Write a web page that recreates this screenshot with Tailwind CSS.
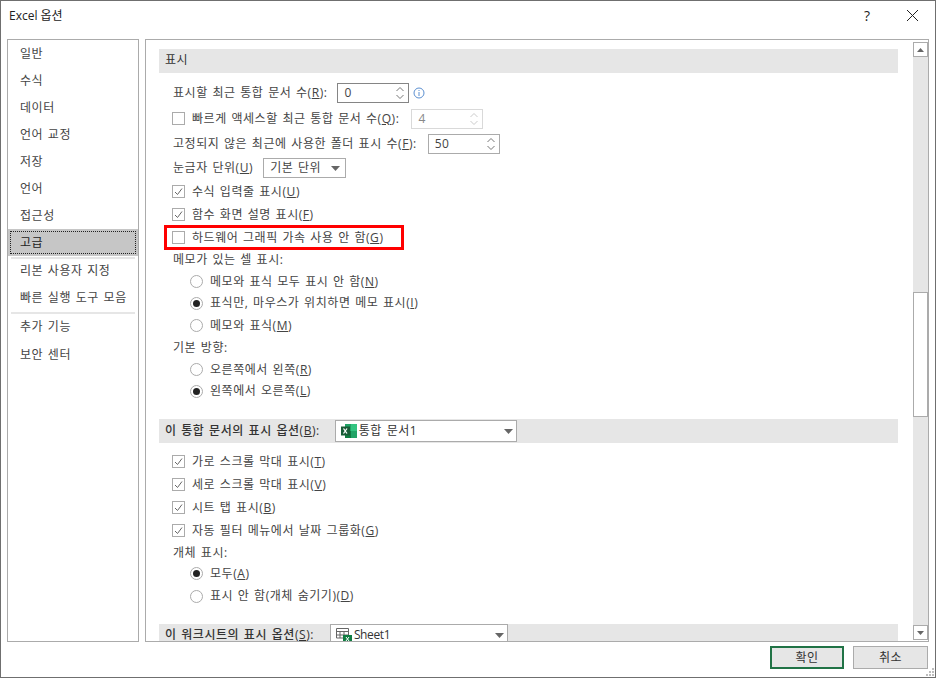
<!DOCTYPE html>
<html lang="ko"><head><meta charset="utf-8"><script src="https://cdn.jsdelivr.net/npm/@tailwindcss/browser@4"></script></head>
<body class="bg-white">
<div class="w-[936px] h-[678px] bg-white border border-[#6f6f6f] flex flex-col overflow-hidden text-[#444] text-[12px] tracking-[0.55px] [word-spacing:1px] font-['Open_Sans','Noto_Sans_CJK_KR',sans-serif] relative">
  <div class="h-[38px] shrink-0 flex items-center pl-[8px] text-[#222] tracking-normal [word-spacing:0px]">
    <span class="flex-1 text-[12px] pb-[8px]">Excel 옵션</span>
    <span class="w-[14px] text-center text-[14px] mr-[33px] pb-[9px]">?</span>
    <svg class="w-[11px] h-[11px] mr-[17px] mb-[10px]" viewBox="0 0 11 11"><path d="M0 0L11 11M11 0L0 11" stroke="#222" stroke-width="1" fill="none"/></svg>
  </div>
  <div class="flex h-[603px] shrink-0 pl-[6px] gap-[6px]">
    <div class="w-[132px] border border-[#ababab] flex flex-col text-[#444]">
      <div class="h-[27px] shrink-0 flex items-center pl-[12px]">일반</div>
      <div class="h-[27px] shrink-0 flex items-center pl-[12px]">수식</div>
      <div class="h-[27px] shrink-0 flex items-center pl-[12px]">데이터</div>
      <div class="h-[27px] shrink-0 flex items-center pl-[12px]">언어 교정</div>
      <div class="h-[27px] shrink-0 flex items-center pl-[12px]">저장</div>
      <div class="h-[27px] shrink-0 flex items-center pl-[12px]">언어</div>
      <div class="h-[27px] shrink-0 flex items-center pl-[12px]">접근성</div>
      <div class="h-[27px] shrink-0 bg-[#c6c6c6] p-[2px]"><div class="h-full flex items-center pl-[9px] text-[#222] border border-dotted border-[#222]">고급</div></div>
      <div class="h-[2px] shrink-0 bg-[#e6e6e6] mx-[3px] mt-[1px]"></div>
      <div class="h-[25px] shrink-0 pb-[1px] flex items-center pl-[12px]">리본 사용자 지정</div>
      <div class="h-[27px] shrink-0 flex items-center pl-[12px]">빠른 실행 도구 모음</div>
      <div class="h-[2px] shrink-0 bg-[#e6e6e6] mx-[3px] mt-[1px]"></div>
      <div class="h-[25px] shrink-0 pt-[1px] flex items-center pl-[12px]">추가 기능</div>
      <div class="h-[27px] shrink-0 mt-[2px] flex items-center pl-[12px]">보안 센터</div>
    </div>
    <div class="w-[784px] border border-[#ababab] flex overflow-hidden">
      <div class="w-[766px] pl-[13px] pt-[9px] overflow-hidden">
        <div class="w-[739px] h-[24px] bg-[#e6e6e6] flex items-center pl-[6px] pb-[2px] text-[#333]">표시</div>
        <div class="h-[7px]"></div>
        <div class="h-[26px] flex items-center pl-[14px]">표시할 최근 통합 문서 수(<u>R</u>):
          <div class="ml-[10px] w-[72px] h-[20px] border border-[#858585] flex items-center pl-[6px] justify-between">0
            <svg class="w-[10px] h-[14px] mr-[3px]" viewBox="0 0 10 14"><path d="M1.5 5L5 1.5L8.5 5M1.5 9L5 12.5L8.5 9" stroke="#777" fill="none"/></svg></div>
          <svg class="w-[12px] h-[12px] ml-[4px]" viewBox="0 0 12 12"><circle cx="6" cy="6" r="5" fill="none" stroke="#5b8fd0"/><path d="M6 5v4M6 3v1" stroke="#5b8fd0"/></svg>
        </div>
        <div class="h-[25px] flex items-center pl-[13px]">
          <span class="w-[13px] h-[13px] border border-[#ababab] mr-[7px]"></span>빠르게 액세스할 최근 통합 문서 수(<u>Q</u>):
          <div class="ml-[12px] w-[72px] h-[20px] border border-[#d9d9d9] text-[#888] flex items-center pl-[6px] justify-between">4
            <svg class="w-[10px] h-[14px] mr-[3px]" viewBox="0 0 10 14"><path d="M1.5 5L5 1.5L8.5 5M1.5 9L5 12.5L8.5 9" stroke="#ccc" fill="none"/></svg></div>
        </div>
        <div class="h-[25px] flex items-center pl-[14px]">고정되지 않은 최근에 사용한 폴더 표시 수(<u>F</u>):
          <div class="ml-[11px] w-[72px] h-[20px] border border-[#ababab] flex items-center pl-[6px] justify-between">50
            <svg class="w-[10px] h-[14px] mr-[3px]" viewBox="0 0 10 14"><path d="M1.5 5L5 1.5L8.5 5M1.5 9L5 12.5L8.5 9" stroke="#777" fill="none"/></svg></div>
        </div>
        <div class="h-[24px] flex items-center pl-[14px]">눈금자 단위(<u>U</u>)
          <div class="ml-[10px] w-[83px] h-[20px] border border-[#ababab] flex items-center pl-[6px] justify-between">기본 단위
            <svg class="w-[9px] h-[5px] mr-[5px]" viewBox="0 0 9 5"><path d="M0 0H9L4.5 5Z" fill="#666"/></svg></div>
        </div>
        <div class="h-[23px] flex items-center pl-[13px]"><span class="w-[13px] h-[13px] border border-[#ababab] mr-[7px] flex items-center justify-center"><svg class="w-[9px] h-[9px]" viewBox="0 0 9 9"><path d="M1 5L3.5 7.5L8 1.5" stroke="#666" fill="none"/></svg></span>수식 입력줄 표시(<u>U</u>)</div>
        <div class="h-[23px] flex items-center pl-[13px]"><span class="w-[13px] h-[13px] border border-[#ababab] mr-[7px] flex items-center justify-center"><svg class="w-[9px] h-[9px]" viewBox="0 0 9 9"><path d="M1 5L3.5 7.5L8 1.5" stroke="#666" fill="none"/></svg></span>함수 화면 설명 표시(<u>F</u>)</div>
        <div class="h-[23px] flex items-center pl-[13px] relative"><span class="w-[13px] h-[13px] border border-[#ababab] mr-[7px]"></span>하드웨어 그래픽 가속 사용 안 함(<u>G</u>)
          <div class="absolute left-[5px] top-[-1px] w-[240px] h-[25px] border-[3px] border-[#f00]"></div></div>
        <div class="h-[22px] flex items-center pl-[14px]">메모가 있는 셀 표시:</div>
        <div class="h-[21px] flex items-center pl-[31px]"><span class="w-[13px] h-[13px] rounded-full border border-[#ababab] mr-[7px]"></span>메모와 표식 모두 표시 안 함(<u>N</u>)</div>
        <div class="h-[22px] flex items-center pl-[31px]"><span class="w-[13px] h-[13px] rounded-full border border-[#ababab] mr-[7px] flex items-center justify-center"><span class="w-[7px] h-[7px] rounded-full bg-[#222]"></span></span>표식만, 마우스가 위치하면 메모 표시(<u>I</u>)</div>
        <div class="h-[23px] flex items-center pl-[31px]"><span class="w-[13px] h-[13px] rounded-full border border-[#ababab] mr-[7px]"></span>메모와 표식(<u>M</u>)</div>
        <div class="h-[22px] flex items-center pl-[14px]">기본 방향:</div>
        <div class="h-[21px] flex items-center pl-[31px]"><span class="w-[13px] h-[13px] rounded-full border border-[#ababab] mr-[7px]"></span>오른쪽에서 왼쪽(<u>R</u>)</div>
        <div class="h-[22px] flex items-center pl-[31px]"><span class="w-[13px] h-[13px] rounded-full border border-[#ababab] mr-[7px] flex items-center justify-center"><span class="w-[7px] h-[7px] rounded-full bg-[#222]"></span></span>왼쪽에서 오른쪽(<u>L</u>)</div>
        <div class="h-[17px]"></div>
        <div class="w-[739px] h-[24px] bg-[#e6e6e6] flex items-center pl-[6px] text-[#333] font-medium">이 통합 문서의 표시 옵션(<u>B</u>):
          <div class="ml-[15px] w-[182px] h-[22px] bg-white border border-[#ababab] flex items-center pl-[5px] font-normal">
            <svg class="w-[16px] h-[16px] mr-[2px]" viewBox="0 0 16 16"><rect x="4" y="1" width="12" height="14" fill="#21a366"/><rect x="10" y="1" width="6" height="7" fill="#33c481"/><rect x="4" y="8" width="6" height="7" fill="#107c41"/><rect x="0" y="3.500" width="9" height="9" fill="#185c37"/><path d="M2.500 5.500L6 10.500M6 5.500L2.500 10.500" stroke="#fff" stroke-width="1.300"/></svg>
            <span class="flex-1">통합 문서1</span>
            <svg class="w-[9px] h-[5px] mr-[3px]" viewBox="0 0 9 5"><path d="M0 0H9L4.500 5Z" fill="#666"/></svg></div>
        </div>
        <div class="h-[7px]"></div>
        <div class="h-[23px] flex items-center pl-[13px]"><span class="w-[13px] h-[13px] border border-[#ababab] mr-[7px] flex items-center justify-center"><svg class="w-[9px] h-[9px]" viewBox="0 0 9 9"><path d="M1 5L3.5 7.5L8 1.5" stroke="#666" fill="none"/></svg></span>가로 스크롤 막대 표시(<u>T</u>)</div>
        <div class="h-[23px] flex items-center pl-[13px]"><span class="w-[13px] h-[13px] border border-[#ababab] mr-[7px] flex items-center justify-center"><svg class="w-[9px] h-[9px]" viewBox="0 0 9 9"><path d="M1 5L3.5 7.5L8 1.5" stroke="#666" fill="none"/></svg></span>세로 스크롤 막대 표시(<u>V</u>)</div>
        <div class="h-[23px] flex items-center pl-[13px]"><span class="w-[13px] h-[13px] border border-[#ababab] mr-[7px] flex items-center justify-center"><svg class="w-[9px] h-[9px]" viewBox="0 0 9 9"><path d="M1 5L3.5 7.5L8 1.5" stroke="#666" fill="none"/></svg></span>시트 탭 표시(<u>B</u>)</div>
        <div class="h-[23px] flex items-center pl-[13px]"><span class="w-[13px] h-[13px] border border-[#ababab] mr-[7px] flex items-center justify-center"><svg class="w-[9px] h-[9px]" viewBox="0 0 9 9"><path d="M1 5L3.5 7.5L8 1.5" stroke="#666" fill="none"/></svg></span>자동 필터 메뉴에서 날짜 그룹화(<u>G</u>)</div>
        <div class="h-[21px] flex items-center pl-[14px]">개체 표시:</div>
        <div class="h-[21px] flex items-center pl-[31px]"><span class="w-[13px] h-[13px] rounded-full border border-[#ababab] mr-[7px] flex items-center justify-center"><span class="w-[7px] h-[7px] rounded-full bg-[#222]"></span></span>모두(<u>A</u>)</div>
        <div class="h-[24px] flex items-center pl-[31px]"><span class="w-[13px] h-[13px] rounded-full border border-[#ababab] mr-[7px]"></span>표시 안 함(개체 숨기기)(<u>D</u>)</div>
        <div class="h-[16px]"></div>
        <div class="w-[739px] h-[24px] bg-[#e6e6e6] flex items-start pt-[2px] pl-[6px] text-[#333] font-medium">이 워크시트의 표시 옵션(<u>S</u>):
          <div class="ml-[16px] w-[178px] h-[22px] -mt-[2px] bg-white border border-[#ababab] flex items-center pl-[5px] font-normal">
            <svg class="w-[16px] h-[16px] mr-[2px]" viewBox="0 0 16 16"><path d="M0.500 1.500H12.500V11H0.500ZM0.500 4.500H12.500M0.500 8H12.500M4 4.500V11M8 4.500V11" stroke="#666" fill="none"/><rect x="7" y="8" width="9" height="8" fill="#107c41"/><path d="M10 10L13 14M13 10L10 14" stroke="#fff"/></svg>
            <span class="flex-1 tracking-[-0.4px]">Sheet1</span>
            <svg class="w-[9px] h-[5px] mr-[3px]" viewBox="0 0 9 5"><path d="M0 0H9L4.500 5Z" fill="#666"/></svg></div>
        </div>
      </div>
      <div class="w-[15px] ml-[1px] mt-[2px] mb-[1px] bg-[#e6e6e6] flex flex-col">
        <div class="h-[15px] bg-white border border-[#ababab] flex items-center justify-center"><svg class="w-[7px] h-[4px]" viewBox="0 0 7 4"><path d="M0 4H7L3.500 0Z" fill="#666"/></svg></div>
        <div class="h-[235px]"></div>
        <div class="h-[125px] bg-white border border-[#ababab]"></div>
        <div class="flex-1"></div>
        <div class="h-[15px] bg-white border border-[#ababab] flex items-center justify-center"><svg class="w-[7px] h-[4px]" viewBox="0 0 7 4"><path d="M0 0H7L3.500 4Z" fill="#666"/></svg></div>
      </div>
    </div>
  </div>
  <div class="flex justify-end gap-[9px] pr-[7px] pt-[4px]">
    <div class="w-[74px] h-[23px] bg-[#e6e6e6] border-2 border-[#217346] flex items-center justify-center text-[#333]">확인</div>
    <div class="w-[75px] h-[23px] bg-[#e6e6e6] border border-[#ababab] flex items-center justify-center text-[#333]">취소</div>
  </div>
  <svg class="absolute right-[1px] bottom-[1px] w-[8px] h-[8px]" viewBox="0 0 8 8"><path d="M6 0h2v2H6zM3 3h2v2H3zM6 3h2v2H6zM0 6h2v2H0zM3 6h2v2H3zM6 6h2v2H6z" fill="#bdbdbd"/></svg>
</div>
</body></html>
